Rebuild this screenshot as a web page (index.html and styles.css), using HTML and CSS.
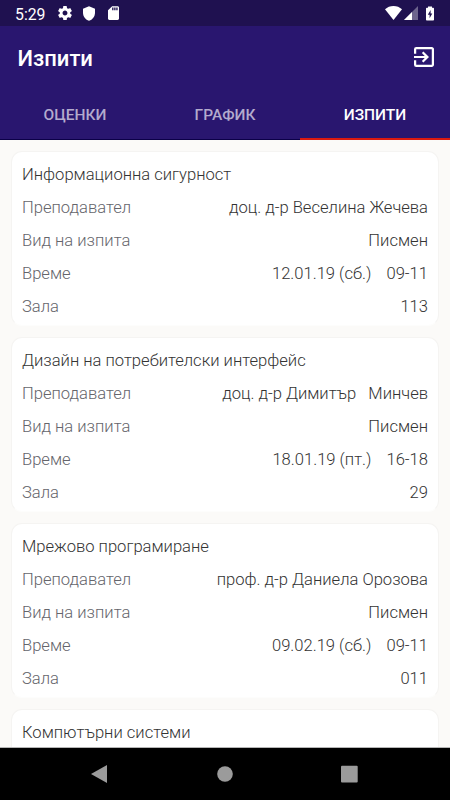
FILE: index.html
```html
<!DOCTYPE html>
<html lang="bg">
<head>
<meta charset="utf-8">
<title>Изпити</title>
<link rel="stylesheet" href="styles.css">
</head>
<body>
<div class="status">
  <span class="clock">5:29</span>
  <svg class="gear" viewBox="2 2 20 20"><path d="M19.43 12.98c.04-.32.07-.64.07-.98s-.03-.66-.07-.98l2.11-1.65c.19-.15.24-.42.12-.64l-2-3.46c-.12-.22-.39-.3-.61-.22l-2.49 1c-.52-.4-1.08-.73-1.69-.98l-.38-2.65A.49.49 0 0 0 14 2h-4c-.25 0-.46.18-.49.42l-.38 2.65c-.61.25-1.17.59-1.69.98l-2.49-1c-.23-.09-.49 0-.61.22l-2 3.46c-.13.22-.07.49.12.64l2.11 1.65c-.04.32-.07.65-.07.98s.03.66.07.98l-2.11 1.65c-.19.15-.24.42-.12.64l2 3.46c.12.22.39.3.61.22l2.49-1c.52.4 1.08.73 1.69.98l.38 2.65c.03.24.24.42.49.42h4c.25 0 .46-.18.49-.42l.38-2.65c.61-.25 1.17-.59 1.69-.98l2.49 1c.23.09.49 0 .61-.22l2-3.46c.12-.22.07-.49-.12-.64l-2.11-1.65zM12 15.5c-1.93 0-3.5-1.57-3.5-3.5s1.57-3.5 3.5-3.5 3.5 1.57 3.5 3.5-1.57 3.5-3.5 3.5z"/></svg>
  <svg class="shield" viewBox="3 1 18 22"><path d="M12 1L3 5v6c0 5.55 3.84 10.74 9 12 5.16-1.26 9-6.45 9-12V5l-9-4z"/></svg>
  <svg class="sd" viewBox="4 2 16 20"><path d="M18 2h-8L4 8v12c0 1.100.9 2 2 2h12c1.100 0 2-.9 2-2V4c0-1.100-.9-2-2-2zm-6 6h-2V4h2v4zm3 0h-2V4h2v4zm3 0h-2V4h2v4z"/></svg>
  <svg class="wifi" viewBox="0 0 17 14"><path d="M8.500 14L0 3.300C2.300 1.200 5.200 0 8.500 0S14.700 1.200 17 3.300z"/></svg>
  <svg class="signal" viewBox="0 0 14 14"><path opacity=".35" d="M0 14L14 0v14z"/><path d="M0 14l8-8v8z"/></svg>
  <svg class="battery" viewBox="0 0 8 14"><path fill-rule="evenodd" d="M2 0h4v1.200H7.200c.5 0 .8.300.8.800v11.200c0 .5-.3.800-.8.800H.8c-.5 0-.8-.3-.8-.8V2c0-.5.300-.8.800-.8H2zM4.600 3.600L1.800 8.200h1.800v3.600l2.700-4.700H4.600z"/></svg>
</div>
<header class="appbar">
  <h1>Изпити</h1>
  <svg class="exit" viewBox="3 3 18 18"><path d="M10.090 15.590L11.500 17l5-5-5-5-1.410 1.410L12.670 11H3v2h9.670l-2.580 2.590zM19 3H5a2 2 0 0 0-2 2v4h2V5h14v14H5v-4H3v4a2 2 0 0 0 2 2h14c1.100 0 2-.9 2-2V5c0-1.100-.9-2-2-2z"/></svg>
</header>
<nav class="tabs">
  <a class="tab">ОЦЕНКИ</a>
  <a class="tab">ГРАФИК</a>
  <a class="tab active">ИЗПИТИ</a>
</nav>
<main class="list">
  <section class="card">
    <h2>Информационна сигурност</h2>
    <div class="row"><span>Преподавател</span><b>доц. д-р Веселина Жечева</b></div>
    <div class="row"><span>Вид на изпита</span><b>Писмен</b></div>
    <div class="row"><span>Време</span><b class="time"><i>12.01.19 (сб.)</i><i>09-11</i></b></div>
    <div class="row"><span>Зала</span><b>113</b></div>
  </section>
  <section class="card">
    <h2>Дизайн на потребителски интерфейс</h2>
    <div class="row"><span>Преподавател</span><b>доц. д-р Димитър &nbsp; Минчев</b></div>
    <div class="row"><span>Вид на изпита</span><b>Писмен</b></div>
    <div class="row"><span>Време</span><b class="time"><i>18.01.19 (пт.)</i><i>16-18</i></b></div>
    <div class="row"><span>Зала</span><b>29</b></div>
  </section>
  <section class="card">
    <h2>Мрежово програмиране</h2>
    <div class="row"><span>Преподавател</span><b>проф. д-р Даниела Орозова</b></div>
    <div class="row"><span>Вид на изпита</span><b>Писмен</b></div>
    <div class="row"><span>Време</span><b class="time"><i>09.02.19 (сб.)</i><i>09-11</i></b></div>
    <div class="row"><span>Зала</span><b>011</b></div>
  </section>
  <section class="card">
    <h2>Компютърни системи</h2>
  </section>
</main>
<footer class="navbar">
  <svg viewBox="0 0 18 18"><path d="M0 9L16 0v18z"/></svg>
  <svg viewBox="0 0 18 18"><circle cx="9" cy="9" r="7.800"/></svg>
  <svg viewBox="0 0 18 18"><rect x="0" y=".8" width="16.700" height="16.700" rx="1"/></svg>
</footer>
</body>
</html>
```
FILE: styles.css
```css
* { box-sizing: border-box; }
body {
  margin: 0;
  width: 450px;
  height: 800px;
  overflow: hidden;
  display: flex;
  flex-direction: column;
  font-family: Roboto, "Noto Sans", sans-serif;
  background: #fbfaf8;
}
svg { display: block; fill: #fff; flex: none; }
.status {
  height: 26px;
  flex: none;
  display: flex;
  align-items: center;
  padding: 0 16px 0 15px;
  background: #1f1150;
}
.clock { width: 43px; padding-top: 2px; font-size: 15.8px; font-weight: 400; color: #fff; }
.gear { width: 14px; height: 14px; }
.shield { width: 12px; height: 15px; margin-left: 11px; }
.sd { width: 11px; height: 14px; margin-left: 13px; }
.wifi { width: 17px; height: 14px; margin-left: auto; }
.signal { width: 14px; height: 14px; margin-left: 2px; }
.battery { width: 8px; height: 15px; margin-left: 8px; }
.appbar {
  height: 63px;
  flex: none;
  display: flex;
  align-items: center;
  justify-content: space-between;
  padding: 0 16px 1px 17.5px;
  background: #29166f;
}
h1 { margin: 0; padding-top: 2px; font-size: 22px; font-weight: 500; color: #fff; }
.exit { width: 20px; height: 20px; }
.tabs {
  height: 51px;
  flex: none;
  display: flex;
  background: #29166f;
  border-bottom: 1px solid #0b0047;
}
.tab {
  flex: 1;
  height: 51px;
  line-height: 52px;
  text-align: center;
  font-size: 15.5px;
  font-weight: 500;
  color: #b3abcd;
}
.tab.active { color: #fff; border-bottom: 2px solid #dc1a10; }
.list {
  flex: 1;
  min-height: 0;
  overflow: hidden;
  padding: 11px 11px 0;
}
.card {
  height: 175px;
  margin-bottom: 11px;
  padding: 6px 10px 0;
  border: 1px solid #f5f4f2;
  border-bottom-color: #fdfdfc;
  border-radius: 11px;
  background: #fff;
}
h2, .row { margin: 0; height: 33px; line-height: 33px; font-size: 16.58px; font-weight: 300; white-space: nowrap; }
h2 { color: #333; }
.row { display: flex; justify-content: space-between; color: #65656b; }
.row b { font-weight: 300; color: #333; }
.time { display: flex; gap: 15px; }
.time i { font-style: normal; }
.navbar {
  height: 53px;
  flex: none;
  display: flex;
  align-items: center;
  justify-content: center;
  gap: 107px;
  padding-bottom: 1px;
  border-top: 1px solid #b5b5b5;
  background: #000;
}
.navbar svg { width: 18px; height: 18px; fill: #9b9b9b; }
```
